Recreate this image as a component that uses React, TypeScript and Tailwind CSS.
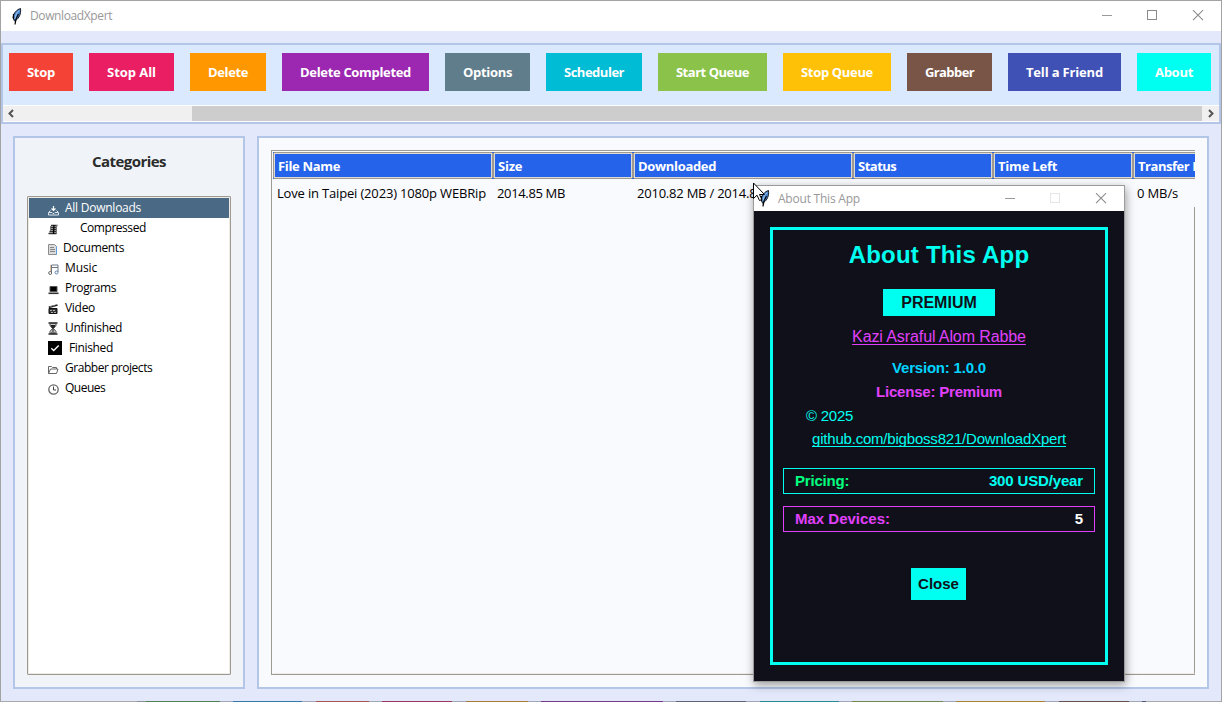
import type { ReactNode } from "react";

const UI = "font-['Open_Sans','Noto_Sans',sans-serif]";

const toolbarButtons = [
  { label: "Stop", cls: "w-16 bg-[#f44336] tracking-[-0.25px]" },
  { label: "Stop All", cls: "w-[85px] bg-[#e91e63] tracking-[-0.05px]" },
  { label: "Delete", cls: "w-[76px] bg-[#ff9800] tracking-[-0.35px]" },
  { label: "Delete Completed", cls: "w-[147px] bg-[#9c27b0] tracking-[-0.32px]" },
  { label: "Options", cls: "w-[85px] bg-[#607d8b] tracking-[-0.3px]" },
  { label: "Scheduler", cls: "w-24 bg-[#00bcd4] tracking-[-0.48px]" },
  { label: "Start Queue", cls: "w-[109px] bg-[#8bc34a] tracking-[-0.48px]" },
  { label: "Stop Queue", cls: "w-[108px] bg-[#ffc107] tracking-[-0.33px]" },
  { label: "Grabber", cls: "w-[85px] bg-[#795548] tracking-[-0.58px]" },
  { label: "Tell a Friend", cls: "w-[113px] bg-[#3f51b5] tracking-[-0.17px]" },
  { label: "About", cls: "w-[74px] bg-[#00fff0] tracking-[-0.25px]" },
];

function Glyph({ children, size = 12 }: { children: ReactNode; size?: number }) {
  return (
    <svg width={size} height={size} viewBox={`0 0 ${size} ${size}`} fill="none" stroke="#222" strokeWidth="1">
      {children}
    </svg>
  );
}

const icons = {
  all: (
    <Glyph>
      <path d="M5.5 2v4.500M3.500 4.500l2 2 2-2" stroke="#fff" strokeWidth="1.200" />
      <path d="M2.500 6.500l-2 2v2.500h10v-2.500l-2-2M1 8.500h3l1 1h1l1-1h3" stroke="#dfe6ec" />
    </Glyph>
  ),
  compressed: (
    <Glyph>
      <path d="M3 2.500h6.500M2.500 4.500h6M2 6.500h6.500M1.500 8.500h7M0.500 10.500h8" stroke="#333" strokeWidth="1.300" />
      <path d="M8.500 2v9M2.500 3v5" stroke="#777" />
      <path d="M6 2l-.5 9" stroke="#000" strokeWidth="1.300" />
    </Glyph>
  ),
  documents: (
    <Glyph>
      <path d="M0.500 1.500h6l2 2v8h-8z" fill="#dcdcdc" stroke="#8c8c8c" />
      <path d="M2 4.500h4M2 6.500h5M2 8.500h5" stroke="#858585" />
      <path d="M8.500 3.500v8" stroke="#5aa0e0" />
    </Glyph>
  ),
  music: (
    <Glyph>
      <path d="M3.500 9.500v-7.500h6.500v7M3.500 4.500h6.500" stroke="#6d7886" />
      <circle cx="2.200" cy="10" r="1.500" stroke="#666" />
      <circle cx="8.500" cy="9.500" r="1.500" stroke="#5d80b4" />
      <path d="M2.500 8v-6" stroke="#e6bf9c" />
    </Glyph>
  ),
  programs: (
    <Glyph>
      <path d="M2 3.500h7v5H2z" fill="#000" stroke="#555" />
      <path d="M0.500 10.300h10" stroke="#333" strokeWidth="1.600" />
    </Glyph>
  ),
  video: (
    <Glyph>
      <path d="M1 5.500h8v5H1z" fill="#333" stroke="#111" />
      <path d="M0.800 4.300L9.500 2" stroke="#222" strokeWidth="1.800" />
      <path d="M2 7.500h6M3 9.500h5" stroke="#aaa" strokeDasharray="2 1" />
      <path d="M2.500 4l1-1.200M5.500 3.200l1-1.200" stroke="#ddd" strokeWidth="0.700" />
    </Glyph>
  ),
  unfinished: (
    <Glyph size={13}>
      <path d="M0.500 1h9M0.500 12h9" stroke="#222" strokeWidth="1.600" />
      <path d="M2 1.500v2l2.500 3-2.500 3v2h6v-2l-2.500-3 2.500-3v-2z" fill="#c9c9c9" stroke="#444" />
      <path d="M3 3.500h4L5 6.500zM5 7v3M3 11h4" fill="#222" />
    </Glyph>
  ),
  finished: (
    <Glyph size={14}>
      <path d="M0 0h14v14H0z" fill="#000" stroke="none" />
      <path d="M3.300 7.300l2.400 2.200 5-5" stroke="#fff" strokeWidth="1.300" />
    </Glyph>
  ),
  grabber: (
    <Glyph>
      <path d="M0.500 10.500v-7h3l1 1h4v1.500M0.500 10.500l2-4.500h7.500l-1.500 4.500z" stroke="#666" />
    </Glyph>
  ),
  queues: (
    <Glyph>
      <circle cx="5.500" cy="6.500" r="4.700" stroke="#666" strokeWidth="1.300" />
      <path d="M5.500 3.500v3.500h2.500" stroke="#444" />
    </Glyph>
  ),
};

const categories = [
  { icon: icons.all, label: "All Downloads", gap: "w-[17px] pt-1", cls: "tracking-[-0.25px]", row: "bg-[#4a6984] text-white" },
  { icon: icons.compressed, label: "Compressed", gap: "w-8 pt-px", cls: "tracking-[-0.46px]" },
  { icon: icons.documents, label: "Documents", gap: "w-[15px] pt-px", cls: "tracking-[-0.35px]" },
  { icon: icons.music, label: "Music", gap: "w-[17px] pt-px", cls: "tracking-[-0.1px]" },
  { icon: icons.programs, label: "Programs", gap: "w-[17px] pt-px", cls: "tracking-[-0.4px]" },
  { icon: icons.video, label: "Video", gap: "w-[17px] pt-px", cls: "tracking-[-0.3px]" },
  { icon: icons.unfinished, label: "Unfinished", gap: "w-[17px]", cls: "tracking-[-0.37px]" },
  { icon: icons.finished, label: "Finished", gap: "w-[21px]", cls: "tracking-[-0.35px]" },
  { icon: icons.grabber, label: "Grabber projects", gap: "w-[17px] pt-px", cls: "tracking-[-0.47px]" },
  { icon: icons.queues, label: "Queues", gap: "w-[17px] pt-px", cls: "tracking-[-0.5px]" },
];

const columns = [
  { title: "File Name", w: "w-[220px]", cls: "tracking-[-0.33px]" },
  { title: "Size", w: "w-[140px]", cls: "tracking-[-0.25px]" },
  { title: "Downloaded", w: "w-[220px]", cls: "tracking-[-0.33px]" },
  { title: "Status", w: "w-[140px]", cls: "tracking-[-0.5px]" },
  { title: "Time Left", w: "w-[140px]", cls: "tracking-[-0.2px]" },
  { title: "Transfer Rate", w: "w-[140px]", cls: "tracking-[-0.45px]" },
];

const cells = [
  { text: "Love in Taipei (2023) 1080p WEBRip", w: "w-[220px]", cls: "tracking-[-0.17px]" },
  { text: "2014.85 MB", w: "w-[140px]", cls: "tracking-[-0.35px]" },
  { text: "2010.82 MB / 2014.85 MB", w: "w-[220px]", cls: "tracking-[-0.22px]" },
  { text: "", w: "w-[140px]", cls: "" },
  { text: "", w: "w-[140px]", cls: "" },
  { text: "0 MB/s", w: "w-[140px]", cls: "tracking-[-0.13px]" },
];

const taskStrip = [
  "w-[136px] bg-[#a9a9a9]", "w-[9px] bg-[#8a8f98]", "w-[74px] bg-[#4f7f55]", "w-[13px] bg-[#a0a8b8]",
  "w-[69px] bg-[#3578ad]", "w-[14px] bg-[#a0a8b8]", "w-[53px] bg-[#a85550]", "w-[13px] bg-[#a0a8b8]",
  "w-[70px] bg-[#98385f]", "w-[14px] bg-[#a0a8b8]", "w-[62px] bg-[#a97a35]", "w-[13px] bg-[#a0a8b8]",
  "w-[122px] bg-[#74398c]", "w-[13px] bg-[#a0a8b8]", "w-[70px] bg-[#5c6675]", "w-[14px] bg-[#a0a8b8]",
  "w-[79px] bg-[#2a8a92]", "w-[13px] bg-[#a0a8b8]", "w-[91px] bg-[#71894f]", "w-[13px] bg-[#a0a8b8]",
  "w-[89px] bg-[#aa8430]", "w-[14px] bg-[#a0a8b8]", "w-[70px] bg-[#66514f]", "w-[13px] bg-[#a0a8b8]",
  "w-[4px] bg-[#4d5578]", "grow bg-[#a9a9a9]",
];

function Feather() {
  return (
    <svg width="10" height="17" viewBox="0 0 10 17">
      <path d="M8.500 0.500C5 1.500 1.500 5 1 9.500L2.500 13l1.200-.5C7 10 9.200 6 8.500 0.500z" fill="#4a86cf" stroke="#101820" strokeWidth="1" />
      <path d="M7 2.500C4.500 5 3.300 8 3 11" fill="none" stroke="#a9cdf0" strokeWidth="1" />
      <path d="M6.500 6C4.500 9 3 12 3 16.500M1.500 6v5" fill="none" stroke="#000" strokeWidth="1.200" />
    </svg>
  );
}

function WindowControls({ maximize }: { maximize: string }) {
  return (
    <svg width="103" height="12" viewBox="0 0 103 12" fill="none" stroke="#999" shapeRendering="crispEdges">
      <path d="M0 5.500h10" />
      <path d="M45.500 0.500h9v9h-9z" className={maximize} />
      <path d="M91 0.200l10 10M101 0.200l-10 10" shapeRendering="auto" stroke="#8a8a8a" strokeWidth="1.100" />
    </svg>
  );
}

function ScrollArrow({ d }: { d: string }) {
  return (
    <svg width="8" height="9" viewBox="0 0 8 9" fill="none" stroke="#555" strokeWidth="2">
      <path d={d} />
    </svg>
  );
}

function AboutDialog() {
  return (
    <div className="absolute left-[752px] top-[184px] flex h-[497px] w-[372px] flex-col border border-[#9b9b9b] bg-[#10101a] shadow-[1px_3px_9px_rgba(0,0,0,0.38)]">
      <div className="flex h-[25px] shrink-0 items-center bg-white pl-[6px]">
        <Feather />
        <span className={`${UI} ml-2 text-xs leading-4 tracking-[-0.22px] text-[#999]`}>About This App</span>
        <div className="ml-auto mr-[16px]">
          <WindowControls maximize="stroke-[#e6e6e6]" />
        </div>
      </div>
      <div className="mx-4 mb-4 mt-4 flex grow flex-col items-center border-[3px] border-[#00fff0] px-[10px] font-['Liberation_Sans',Arial,sans-serif]">
        <h2 className="mt-[9px] text-2xl font-bold leading-8 tracking-[0.2px] text-[#00fff0]">About This App</h2>
        <div className="mt-[18px] flex h-[27px] w-28 items-center justify-center bg-[#00fff0] text-base font-bold text-[#10101a]">PREMIUM</div>
        <div className="mt-[9px] text-base leading-6 tracking-[-0.1px] text-[#e040fb] underline decoration-1 underline-offset-[2px] [text-decoration-skip-ink:none]">
          Kazi Asraful Alom Rabbe
        </div>
        <div className="mt-[7px] text-[15px] font-bold leading-6 tracking-[-0.2px] text-[#00d4ff]">Version: 1.0.0</div>
        <div className="text-[15px] font-bold leading-6 tracking-[-0.2px] text-[#e040fb]">License: Premium</div>
        <div className="self-start pl-[23px] text-[15px] leading-6 tracking-[-0.25px] text-[#00fff0]">© 2025</div>
        <div className="text-[15px] leading-[22px] tracking-[-0.2px] text-[#00fff0] underline decoration-1 underline-offset-[2px] [text-decoration-skip-ink:none]">
          github.com/bigboss821/DownloadXpert
        </div>
        <div className="mt-[18px] flex h-[26px] w-full items-center justify-between border border-[#00fff0] px-[11px] text-[15px] font-bold">
          <span className="tracking-[-0.2px] text-[#00ff7f]">Pricing:</span>
          <span className="tracking-[-0.15px] text-[#00fff0]">300 USD/year</span>
        </div>
        <div className="mt-3 flex h-[26px] w-full items-center justify-between border border-[#e040fb] px-[11px] text-[15px] font-bold">
          <span className="text-[#e040fb]">Max Devices:</span>
          <span className="text-white">5</span>
        </div>
        <button className="mr-px mt-9 h-8 w-[55px] bg-[#00fff0] text-[15px] font-bold text-[#10101a]">Close</button>
      </div>
    </div>
  );
}

export default function App() {
  return (
    <div className={`${UI} relative flex h-[702px] w-[1222px] flex-col overflow-hidden border-x border-t border-[#a3a3a3] bg-[#e3e9fb] text-black`}>
      <header className="flex h-[30px] shrink-0 items-center bg-white pl-[11px]">
        <Feather />
        <span className="ml-2 text-xs leading-4 tracking-[-0.38px] text-[#999]">DownloadXpert</span>
        <div className="ml-auto mr-[16px]">
          <WindowControls maximize="stroke-[#8a8a8a]" />
        </div>
      </header>

      <section className="mt-3 flex h-[81px] shrink-0 flex-col border-2 border-[#b4c6e7] bg-[#dbe9ff]">
        <div className="flex h-[60px] gap-4 pl-[6px] pt-2">
          {toolbarButtons.map((b) => (
            <button key={b.label} className={`${b.cls} h-[38px] shrink-0 whitespace-nowrap pt-px text-[13px] font-bold text-white`}>
              {b.label}
            </button>
          ))}
        </div>
        <div className="flex h-[17px] border-y border-white bg-[#f0f0f0]">
          <div className="flex w-[17px] items-center justify-center pr-px">
            <ScrollArrow d="M6 1L2.500 4.500 6 8" />
          </div>
          <div className="w-[172px]" />
          <div className="grow bg-[#cdcdcd]" />
          <div className="flex w-[17px] items-center justify-center">
            <ScrollArrow d="M2 1l3.500 3.500L2 8" />
          </div>
        </div>
      </section>

      <main className="mt-3 flex h-[553px] shrink-0 gap-3 px-3">
        <aside className="flex w-[232px] flex-col border-2 border-[#b4c6e7] bg-[#f0f4f9] px-3 pb-3">
          <h1 className="mt-3 text-center text-[15px] font-bold leading-[22px] tracking-[-0.55px] text-[#2b2b2b]">Categories</h1>
          <ul className="mt-6 grow rounded-[1px] border border-[#9e9a91] bg-white p-px shadow-[inset_0_0_0_1px_#eeebe7]">
            {categories.map((c) => (
              <li key={c.label} className={`flex h-5 items-center pl-[19px] text-xs ${c.row ?? ""}`}>
                <span className={`${c.gap} flex h-5 shrink-0 items-center`}>{c.icon}</span>
                <span className={`${c.cls} leading-5`}>{c.label}</span>
              </li>
            ))}
          </ul>
        </aside>

        <section className="flex w-[952px] flex-col border-2 border-[#b4c6e7] bg-[#f9fafd] p-3">
          <div className="flex grow flex-col overflow-hidden border-y border-l border-[#9e9a91] pl-px pt-px">
            <div className="flex h-[27px] shrink-0">
              {columns.map((c) => (
                <div key={c.title} className={`${c.w} shrink-0 bg-[#2563eb]`}>
                  <div className="h-full border border-[#9e9a91] [clip-path:polygon(1px_0,calc(100%-1px)_0,calc(100%-1px)_1px,100%_1px,100%_calc(100%-1px),calc(100%-1px)_calc(100%-1px),calc(100%-1px)_100%,1px_100%,1px_calc(100%-1px),0_calc(100%-1px),0_1px,1px_1px)]">
                    <div className="flex h-full items-center border border-[#dcdad5] bg-[#2563eb] pl-[3px]">
                      <span className={`${c.cls} whitespace-nowrap text-[13px] font-bold leading-5 text-white`}>{c.title}</span>
                    </div>
                  </div>
                </div>
              ))}
            </div>
            <div className="flex h-7 shrink-0">
              {cells.map((c, i) => (
                <div key={i} className={`${c.w} ${c.cls} shrink-0 whitespace-nowrap pl-1 text-[13px] leading-7`}>
                  {c.text}
                </div>
              ))}
            </div>
            <div className="grow border-b border-r border-b-[#eeebe7] border-r-[#9e9a91]" />
          </div>
        </section>
      </main>

      <footer className="mt-auto flex h-px">
        {taskStrip.map((s, i) => (
          <div key={i} className={`${s} shrink-0`} />
        ))}
      </footer>

      <AboutDialog />

      <svg className="absolute left-[751px] top-[181px]" width="14" height="21" viewBox="0 0 14 21">
        <path d="M1.500 1v15.500l3.500-3.300 2.500 5.300 2.300-1-2.300-5h5z" fill="#fff" stroke="#000" strokeWidth="1" />
      </svg>
    </div>
  );
}
